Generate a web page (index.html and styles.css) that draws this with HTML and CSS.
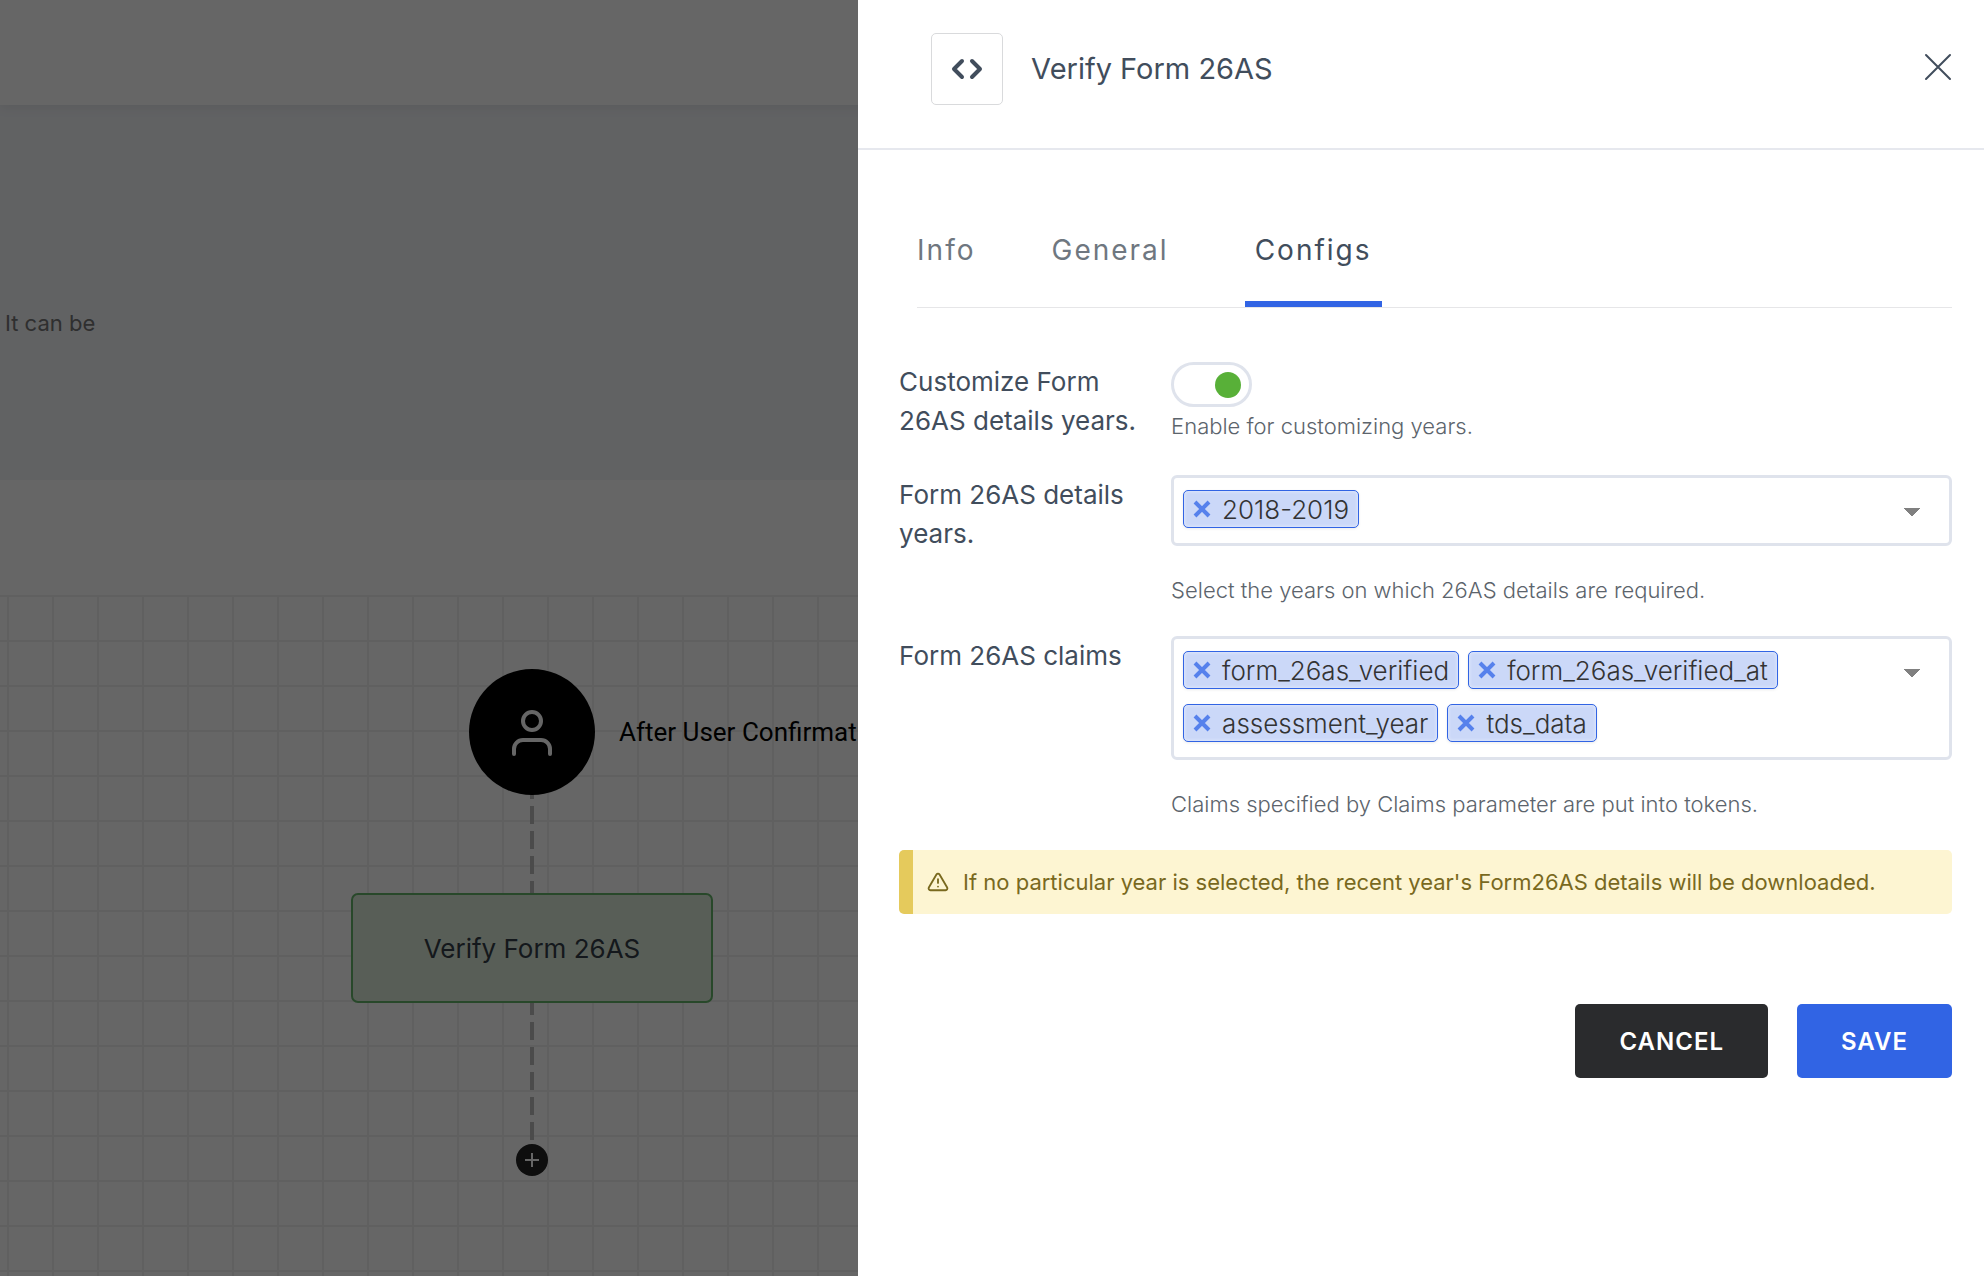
FILE: index.html
```html
<!DOCTYPE html>
<html lang="en">
<head>
<meta charset="utf-8">
<meta name="viewport" content="width=device-width, initial-scale=1">
<title>Verify Form 26AS</title>
<link rel="stylesheet" href="styles.css">
</head>
<body>
<div class="page">
  <header class="topbar"></header>
  <section class="intro"><p class="intro-text">It can be</p></section>
  <main class="canvas">
    <div class="edge edge-first"></div>
    <div class="edge edge-second"></div>
    <div class="start-node">
      <svg class="user-icon" viewBox="0 0 42 48" fill="none" stroke="currentColor" stroke-width="4" stroke-linecap="round" aria-hidden="true">
        <circle cx="21" cy="13" r="9"/>
        <path d="M3 46v-5a9 9 0 0 1 9-9h18a9 9 0 0 1 9 9v5"/>
      </svg>
    </div>
    <p class="start-label">After User Confirmation</p>
    <div class="task-node">Verify Form 26AS</div>
    <button class="add-node" type="button" aria-label="Add step">
      <svg viewBox="0 0 16 16" width="16" height="16" stroke="currentColor" stroke-width="2" aria-hidden="true"><path d="M8 1v14M1 8h14"/></svg>
    </button>
  </main>
</div>
<div class="backdrop"></div>
<aside class="drawer" role="dialog" aria-labelledby="drawer-title">
  <header class="drawer-head">
    <span class="code-box">
      <svg viewBox="0 0 32 22" width="32" height="22" fill="none" stroke="currentColor" stroke-width="4" stroke-linecap="round" stroke-linejoin="round" aria-hidden="true"><path d="M11 3L3 11l8 8M21 3l8 8-8 8"/></svg>
    </span>
    <h1 class="drawer-title" id="drawer-title">Verify Form 26AS</h1>
    <button class="close" type="button" aria-label="Close">
      <svg viewBox="0 0 28 28" width="28" height="28" stroke="currentColor" stroke-width="2" stroke-linecap="round" aria-hidden="true"><path d="M2 2l24 24M26 2L2 26"/></svg>
    </button>
  </header>
  <div class="drawer-body">
    <div class="tabs" role="tablist">
      <button class="tab" type="button" role="tab">Info</button>
      <button class="tab" type="button" role="tab">General</button>
      <button class="tab tab-active" type="button" role="tab" aria-selected="true">Configs</button>
    </div>
    <form class="form">
      <div class="row row-switch">
        <label class="label" for="customize">Customize Form 26AS details years.</label>
        <div class="field">
          <input class="switch" id="customize" type="checkbox" checked>
          <p class="help">Enable for customizing years.</p>
        </div>
      </div>
      <div class="row">
        <label class="label" for="years">Form 26AS details years.</label>
        <div class="field">
          <div class="picker">
            <ul class="tags">
              <li class="tag"><button class="remove" type="button" aria-label="Remove 2018-2019"><svg viewBox="0 0 18 18" width="18" height="18" stroke="currentColor" stroke-width="4" aria-hidden="true"><path d="M2 2l14 14M16 2L2 16"/></svg></button>2018-2019</li>
            </ul>
            <select class="picker-menu" id="years"><option></option></select>
          </div>
          <p class="help">Select the years on which 26AS details are required.</p>
        </div>
      </div>
      <div class="row">
        <label class="label" for="claims">Form 26AS claims</label>
        <div class="field">
          <div class="picker">
            <ul class="tags">
              <li class="tag"><button class="remove" type="button" aria-label="Remove form_26as_verified"><svg viewBox="0 0 18 18" width="18" height="18" stroke="currentColor" stroke-width="4" aria-hidden="true"><path d="M2 2l14 14M16 2L2 16"/></svg></button>form_26as_verified</li>
              <li class="tag"><button class="remove" type="button" aria-label="Remove form_26as_verified_at"><svg viewBox="0 0 18 18" width="18" height="18" stroke="currentColor" stroke-width="4" aria-hidden="true"><path d="M2 2l14 14M16 2L2 16"/></svg></button>form_26as_verified_at</li>
              <li class="tag"><button class="remove" type="button" aria-label="Remove assessment_year"><svg viewBox="0 0 18 18" width="18" height="18" stroke="currentColor" stroke-width="4" aria-hidden="true"><path d="M2 2l14 14M16 2L2 16"/></svg></button>assessment_year</li>
              <li class="tag"><button class="remove" type="button" aria-label="Remove tds_data"><svg viewBox="0 0 18 18" width="18" height="18" stroke="currentColor" stroke-width="4" aria-hidden="true"><path d="M2 2l14 14M16 2L2 16"/></svg></button>tds_data</li>
            </ul>
            <select class="picker-menu" id="claims"><option></option></select>
          </div>
          <p class="help">Claims specified by Claims parameter are put into tokens.</p>
        </div>
      </div>
      <div class="alert" role="note">
        <svg class="alert-icon" viewBox="0 0 24 24" width="22" height="22" fill="none" stroke="currentColor" stroke-width="2" stroke-linecap="round" stroke-linejoin="round" aria-hidden="true"><path d="M10.300 3.900L2 18a2 2 0 0 0 1.700 3h16.600a2 2 0 0 0 1.700-3L13.700 3.900a2 2 0 0 0-3.400 0zM12 9v4M12 17h.01"/></svg>
        <p class="alert-text">If no particular year is selected, the recent year's Form26AS details will be downloaded.</p>
      </div>
      <div class="actions">
        <button class="btn btn-dark" type="button">CANCEL</button>
        <button class="btn btn-primary" type="submit">SAVE</button>
      </div>
    </form>
  </div>
</aside>
</body>
</html>
```
FILE: styles.css
```css
* {
  box-sizing: border-box;
}

body {
  margin: 0;
  background: #fff;
  color: #414d5c;
  font-family: Inter, "Liberation Sans", sans-serif;
  overflow: hidden;
}

p, h1, ul {
  margin: 0;
  padding: 0;
}

button {
  font: inherit;
  color: inherit;
  border: 0;
  padding: 0;
  background: none;
  cursor: pointer;
}

svg {
  display: block;
}

/* Flow editor behind the drawer */
.page {
  display: flex;
  flex-direction: column;
  min-height: 100vh;
}

.topbar {
  height: 105px;
  box-shadow: 0 2px 12px rgba(0, 0, 0, 0.08);
  z-index: 1;
}

.intro {
  height: 375px;
  margin-bottom: 115px;
  padding: 202px 5px 0;
  background: #f2f4f8;
}

.intro-text {
  font-size: 22px;
  line-height: 33px;
  color: #757575;
}

.canvas {
  position: relative;
  flex: 1;
  overflow: hidden;
  background-image:
    linear-gradient(#f0f0f0 2px, transparent 2px),
    linear-gradient(90deg, #f0f0f0 2px, transparent 2px);
  background-size: 45px 45px;
  background-position: 7px 0;
}

.edge {
  position: absolute;
  left: 530px;
  width: 4px;
  background: repeating-linear-gradient(#bbb 0 18px, transparent 18px 25px);
}

.edge-first {
  top: 186px;
  height: 112px;
}

.edge-second {
  top: 402px;
  height: 143px;
}

.start-node {
  position: absolute;
  left: 469px;
  top: 74px;
  width: 126px;
  height: 126px;
  border-radius: 50%;
  background: #000;
  color: #fff;
  display: grid;
  place-items: center;
}

.user-icon {
  width: 42px;
  height: 48px;
}

.start-label {
  position: absolute;
  left: 619px;
  top: 119px;
  font: 400 26px/36px Roboto, sans-serif;
  color: #000;
  white-space: nowrap;
}

.task-node {
  position: absolute;
  left: 351px;
  top: 298px;
  width: 362px;
  height: 110px;
  border: 2px solid #64b469;
  border-radius: 7px;
  background: #dcebda;
  color: #343e46;
  font-size: 26px;
  display: grid;
  place-items: center;
}

.add-node {
  position: absolute;
  left: 516px;
  top: 549px;
  width: 32px;
  height: 32px;
  border-radius: 50%;
  background: #232323;
  color: #fff;
  display: grid;
  place-items: center;
}

.backdrop {
  position: fixed;
  inset: 0;
  z-index: 2;
  background: rgba(0, 0, 0, 0.6);
}

/* Drawer */
.drawer {
  position: fixed;
  z-index: 3;
  top: 0;
  right: 0;
  bottom: 0;
  width: 56.75vw;
  background: #fff;
  overflow: auto;
}

.drawer-head {
  display: flex;
  align-items: center;
  padding: 33px 32px 43px 73px;
  border-bottom: 2px solid #e6e8ee;
}

.code-box {
  width: 72px;
  height: 72px;
  border: 1px solid #d9dadc;
  border-radius: 5px;
  display: grid;
  place-items: center;
}

.drawer-title {
  flex: 1;
  margin-left: 28px;
  font-size: 29px;
  font-weight: 400;
  line-height: 40px;
}

.close {
  margin-bottom: 4px;
}

.drawer-body {
  padding: 72px 32px 32px 41px;
}

.tabs {
  display: flex;
  align-items: flex-end;
  margin-left: 18px;
  border-bottom: 1px solid #e6e6e8;
}

.tab {
  height: 85px;
  padding: 6px 10px 29px;
  border-bottom: 6px solid transparent;
  margin-right: 66px;
  font-size: 28px;
  line-height: 40px;
  letter-spacing: 2px;
  color: #6f7780;
}

.tab:first-child {
  padding-left: 0;
  padding-right: 0;
}

.tab-active {
  color: #414d5c;
  border-bottom-color: #3164e4;
}

.form {
  padding-top: 54px;
}

.row {
  display: grid;
  grid-template-columns: 240px 1fr;
  column-gap: 32px;
  margin-bottom: 29px;
}

.row-switch {
  margin-bottom: 32px;
}

.label {
  font-size: 26px;
  line-height: 39px;
}

.switch {
  appearance: none;
  display: flex;
  align-items: center;
  justify-content: flex-end;
  width: 81px;
  height: 45px;
  margin: 0;
  padding: 0 8px;
  border: 3px solid #dfe3ec;
  border-radius: 23px;
}

.switch::before {
  content: "";
  width: 26px;
  height: 26px;
  border-radius: 50%;
  background: #b4bac4;
}

.switch:not(:checked) {
  justify-content: flex-start;
}

.switch:checked::before {
  background: #58b038;
}

.help {
  margin-top: 28px;
  font-size: 22px;
  font-weight: 300;
  line-height: 33px;
  color: #5c646c;
}

.row-switch .help {
  margin-top: 3px;
}

.picker {
  display: flex;
  align-items: flex-start;
  border: 3px solid #dfe3ec;
  border-radius: 6px;
  padding: 12px 9px 15px;
}

.tags {
  flex: 1;
  display: flex;
  flex-wrap: wrap;
  gap: 15px 9px;
  list-style: none;
}

.tag {
  display: flex;
  align-items: center;
  gap: 11px;
  height: 38px;
  padding: 0 9px;
  border: 1px solid #3164e4;
  border-radius: 5px;
  background: #cbd8f8;
  box-shadow: inset 0 0 3px 1px #dde6fb, 0 1px 3px rgba(0, 0, 0, 0.08);
  font-size: 26px;
  font-weight: 300;
  color: #333;
}

.remove {
  color: #5681ec;
}

.picker-menu {
  appearance: none;
  width: 60px;
  height: 38px;
  border: 0;
  background:
    linear-gradient(to top right, transparent 50%, #808080 51%) 23px 18px / 9px 9px no-repeat,
    linear-gradient(to top left, transparent 50%, #808080 51%) 32px 18px / 9px 9px no-repeat;
}

.alert {
  display: flex;
  align-items: center;
  gap: 14px;
  min-height: 64px;
  padding: 0 13px 0 14px;
  border-left: 14px solid #e5ca5c;
  border-radius: 5px;
  background: #fdf5d2;
  color: #79691e;
}

.alert-icon {
  flex: none;
}

.alert-text {
  font-size: 22px;
  line-height: 33px;
}

.actions {
  display: flex;
  justify-content: flex-end;
  gap: 29px;
  margin-top: 90px;
}

.btn {
  height: 74px;
  padding: 0 44px;
  border-radius: 5px;
  font-size: 24px;
  font-weight: 600;
  letter-spacing: 1px;
  color: #fff;
}

.btn-dark {
  background: #2a2b2d;
}

.btn-primary {
  background: #3164e4;
}
```
